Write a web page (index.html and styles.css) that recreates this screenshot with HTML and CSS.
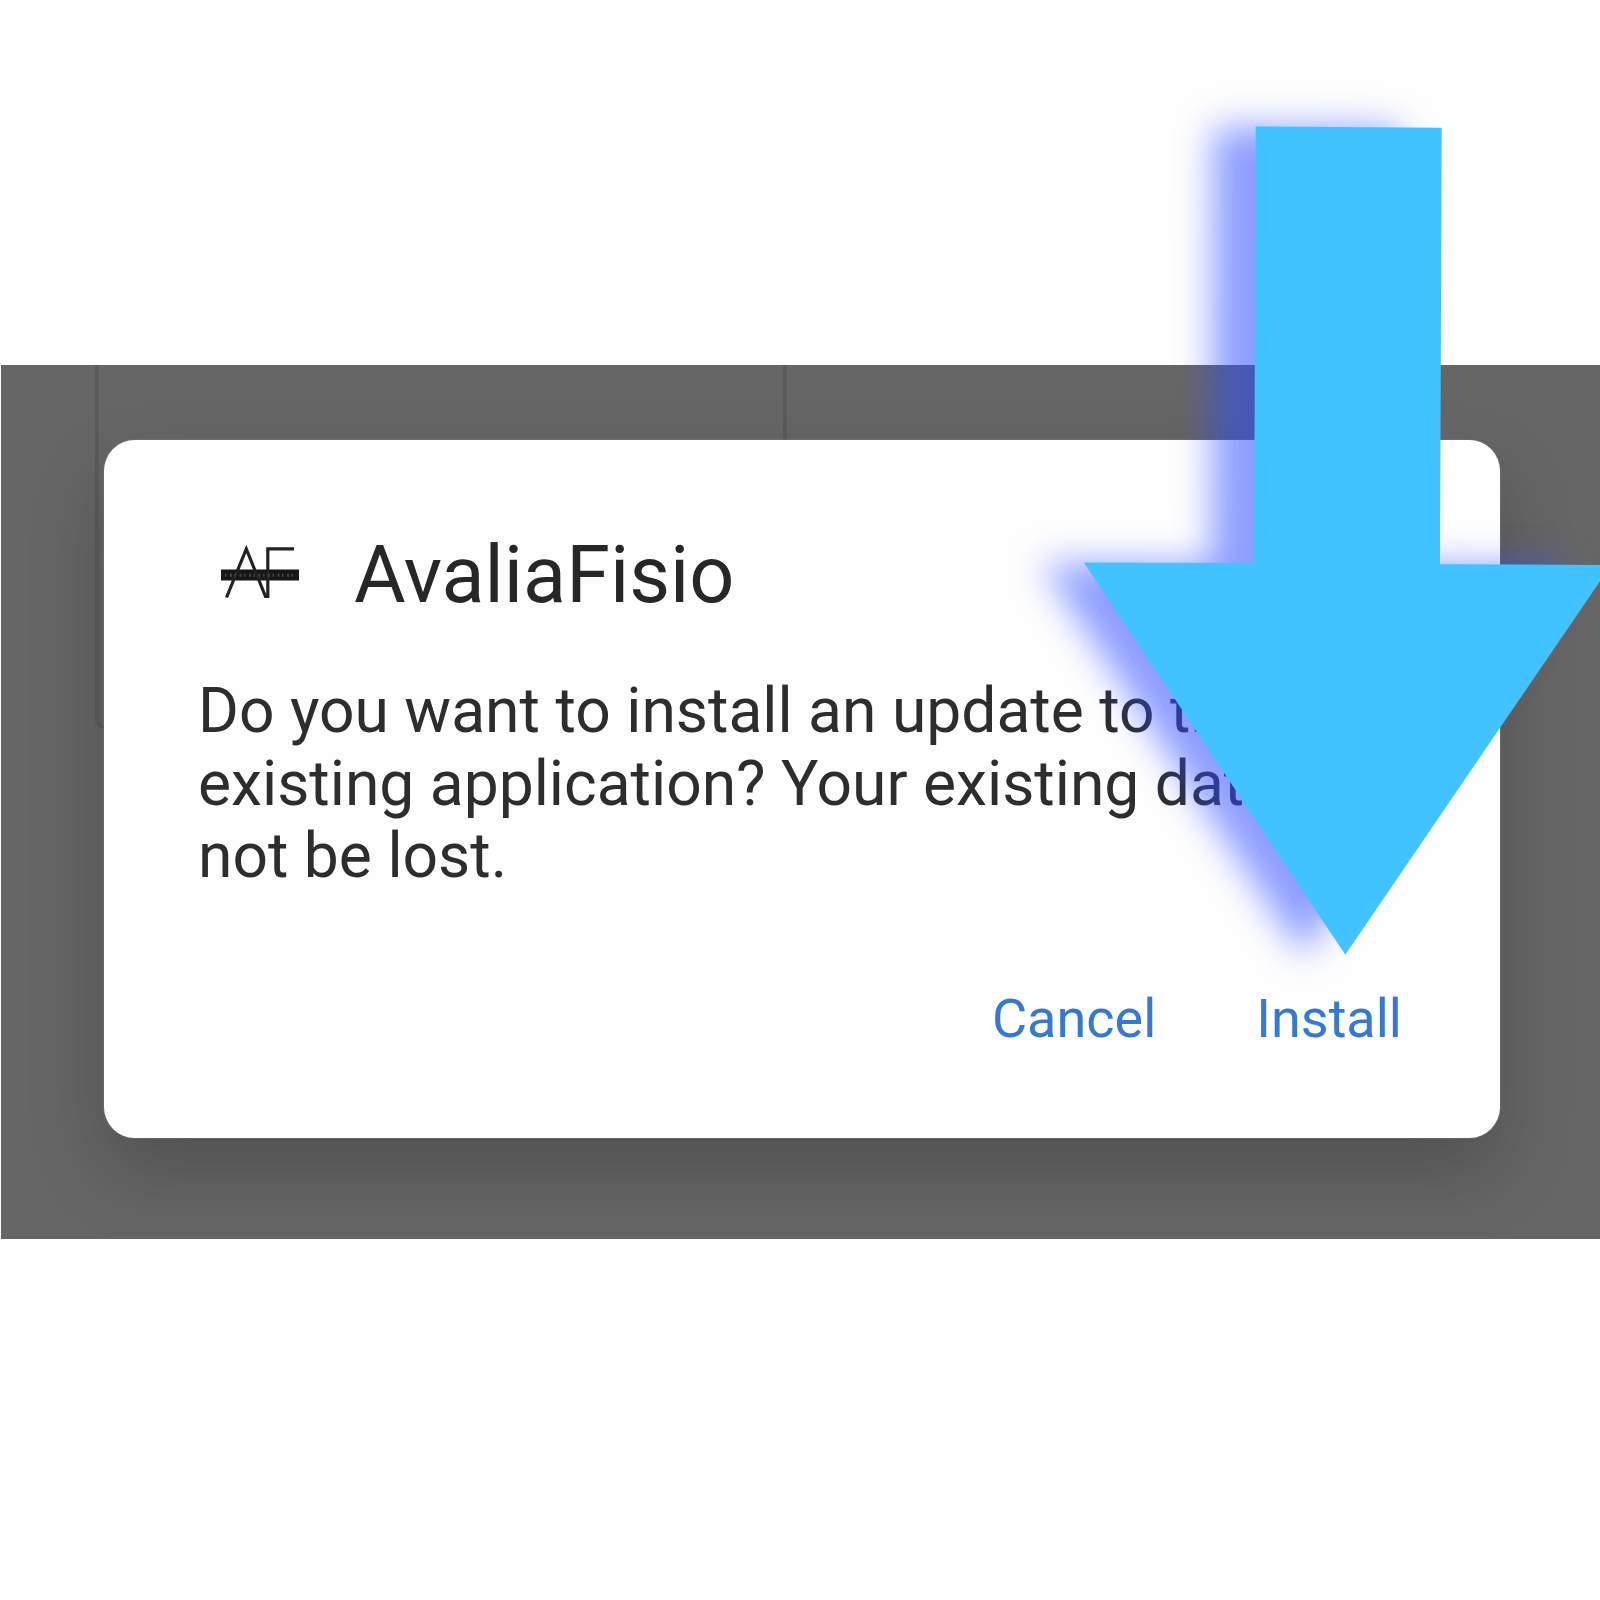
FILE: index.html
```html
<!DOCTYPE html>
<html lang="en">
<head>
<meta charset="utf-8">
<title>AvaliaFisio</title>
<link rel="stylesheet" href="styles.css">
</head>
<body>
<main class="page">
  <section class="backdrop">
    <div class="panel-outline"></div>
    <div class="dialog" role="dialog">
      <header class="dialog-header">
        <svg class="app-icon" viewBox="0 0 110 80" aria-hidden="true">
          <rect x="16" y="38.5" width="78" height="11" fill="#171717"/>
          <path d="M21.5 66.5 41.3 18 60.5 65.5H62.8V17.8H89" fill="none" stroke="#222" stroke-width="3.2"/>
          <path d="M20 44.2H91" fill="none" stroke="#444" stroke-width="3" stroke-dasharray="1.5 3.5 2 2.5"/>
        </svg>
        <h1 class="title">AvaliaFisio</h1>
      </header>
      <p class="message">Do you want to install an update to this<br>existing application? Your existing data will<br>not be lost.</p>
      <footer class="actions">
        <button class="action cancel">Cancel</button>
        <button class="action">Install</button>
      </footer>
    </div>
  </section>
  <svg class="arrow" viewBox="0 0 1600 1600" aria-hidden="true">
    <defs>
      <filter id="glow" filterUnits="userSpaceOnUse" x="950" y="40" width="760" height="1020" color-interpolation-filters="sRGB">
        <feGaussianBlur stdDeviation="18"/>
      </filter>
    </defs>
    <path class="arrow-glow" filter="url(#glow)" transform="translate(-42 1)" d="M1255.7 126.5 1441.7 127.7 1440 564.2 1611 565 1345.3 954.8 1083.8 562.5 1254 563Z"/>
    <path class="arrow-shape" d="M1255.7 126.5 1441.7 127.7 1440 564.2 1611 565 1345.3 954.8 1083.8 562.5 1254 563Z"/>
  </svg>
</main>
</body>
</html>
```
FILE: styles.css
```css
* { box-sizing: border-box; }
body { margin: 0; background: #fefefe; font-family: Roboto, "Liberation Sans", sans-serif; }
.page { position: relative; width: 1600px; height: 1600px; padding: 364.5px 0 0 1px; overflow: hidden; }
.backdrop { position: relative; height: 874.5px; padding: 75px 100px 0 103px; background: #666; overflow: hidden; }
.panel-outline {
  position: absolute; left: 94px; top: -20px; width: 692px; height: 384px;
  border: 4px solid #5c5c5c; border-radius: 10px;
}
.dialog {
  position: relative; display: flex; flex-direction: column;
  height: 698.5px; padding: 91px 74px 0 94px;
  background: #fefefe; border-radius: 31px;
  box-shadow: 0 0 2px #8a8a8a, 0 34px 76px rgba(0, 0, 0, .21);
}
.dialog-header { display: flex; align-items: flex-start; height: 91px; padding-left: 7px; }
.app-icon { width: 110px; height: 80px; }
.title { margin: 0 0 0 39px; font-size: 79.2px; line-height: 89px; font-weight: 400; color: #272727; }
.message { margin: 53.3px 0 0; font-size: 62.35px; line-height: 72.8px; color: #2d2d2d; white-space: nowrap; }
.actions { display: flex; justify-content: flex-end; gap: 52px; margin-top: 94.3px; }
.action {
  padding: 0 24px; border: 0; background: none;
  font: 400 54px/64px Roboto, "Liberation Sans", sans-serif; color: #3579d0;
}
.arrow { position: absolute; left: 0; top: 0; width: 1600px; height: 1600px; pointer-events: none; }
.arrow-glow { fill: rgb(47, 77, 255); fill-opacity: .55; }
.arrow-shape { fill: #40c3ff; }
```
